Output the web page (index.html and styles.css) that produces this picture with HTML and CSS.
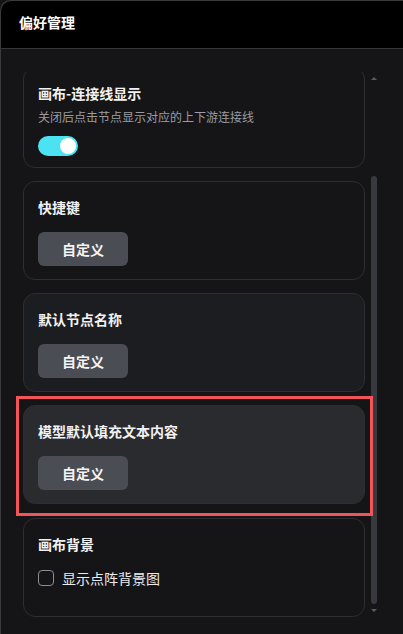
FILE: index.html
```html
<!DOCTYPE html>
<html lang="zh">
<head>
<meta charset="utf-8">
<title>偏好管理</title>
<link rel="stylesheet" href="styles.css">
</head>
<body>
<div class="drawer">
  <header class="header">
    <h1 class="header-title">偏好管理</h1>
  </header>
  <main class="body">
    <div class="scroll-row">
      <div class="list">
        <section class="card card-first">
          <div class="card-title">画布-连接线显示</div>
          <div class="card-desc">关闭后点击节点显示对应的上下游连接线</div>
          <div class="switch"><span class="switch-knob"></span></div>
        </section>
        <section class="card">
          <div class="card-title">快捷键</div>
          <button class="btn">自定义</button>
        </section>
        <section class="card card-hover">
          <div class="card-title">默认节点名称</div>
          <button class="btn">自定义</button>
        </section>
        <section class="card card-active">
          <div class="card-title">模型默认填充文本内容</div>
          <button class="btn">自定义</button>
        </section>
        <section class="card card-last">
          <div class="card-title">画布背景</div>
          <label class="check-row"><span class="checkbox"></span><span class="check-label">显示点阵背景图</span></label>
        </section>
      </div>
      <div class="scrollbar">
        <span class="sb-up"></span>
        <span class="sb-thumb"></span>
        <span class="sb-down"></span>
      </div>
    </div>
  </main>
</div>
</body>
</html>
```
FILE: styles.css
```css
html, body {
  margin: 0;
  padding: 0;
  background: #151518;
  height: 100%;
}
body {
  font-family: "Noto Sans CJK SC", "Noto Sans", sans-serif;
  color: #f2f2f2;
  overflow: hidden;
}
.drawer {
  height: 634px;
  background: #151518;
  border-top-left-radius: 10px;
  overflow: hidden;
  box-shadow: inset 1px 1px 0 #3a3a3d;
}
.header {
  height: 48px;
  background: #000;
  border-bottom: 1px solid #36363a;
  display: flex;
  align-items: center;
  padding-left: 19px;
  border-top-left-radius: 10px;
  box-shadow: inset 1px 1px 0 #3a3a3d;
}
.header-title {
  margin: 0;
  margin-top: -4px;
  font-size: 14px;
  line-height: 20px;
  font-weight: 700;
  color: #ffffff;
}
.body {
  padding-top: 23px;
}
.scroll-row {
  display: flex;
  height: 546px;
}
.list {
  width: 342px;
  margin-left: 23px;
  overflow-x: visible;
  overflow-y: clip;
  display: flex;
  flex-direction: column;
  gap: 13px;
}
.card {
  flex: none;
  box-sizing: border-box;
  border: 1px solid #2d2e32;
  border-radius: 12px;
  padding: 15px 14px 13px;
  background: #151518;
  position: relative;
}
.card-first {
  margin-top: -5px;
  padding-bottom: 11px;
}
.card-hover {
  background: #1c1d20;
}
.card-active {
  background: #2a2b2f;
}
.card-active::after {
  content: "";
  position: absolute;
  top: -10px;
  left: -8px;
  right: -9px;
  bottom: -13px;
  border: 3px solid #f25458;
  z-index: 1;
  pointer-events: none;
}
.card-last {
  padding-bottom: 27px;
  margin-top: 1px;
}
.card-title {
  font-size: 14px;
  line-height: 20px;
  font-weight: 700;
  color: #f2f2f2;
}
.card-desc {
  margin-top: 4px;
  font-size: 12px;
  line-height: 20px;
  color: #9b9ba1;
}
.switch {
  margin-top: 9px;
  width: 40px;
  height: 20px;
  border-radius: 10px;
  background: #4de2f1;
  display: flex;
  align-items: center;
  justify-content: flex-end;
  padding-right: 2px;
  box-sizing: border-box;
}
.switch-knob {
  width: 16px;
  height: 16px;
  border-radius: 50%;
  background: #ffffff;
}
.btn {
  display: block;
  margin-top: 15px;
  width: 90px;
  height: 34px;
  border: none;
  border-radius: 6px;
  background: #4b4d55;
  color: #f4f4f4;
  font-family: inherit;
  font-size: 14px;
  font-weight: 700;
  line-height: 20px;
  padding: 0;
}
.check-row {
  margin-top: 13px;
  display: flex;
  align-items: center;
  gap: 8px;
  height: 22px;
}
.checkbox {
  width: 16px;
  height: 16px;
  box-sizing: border-box;
  border: 1px solid #8d8d92;
  border-radius: 4px;
}
.check-label {
  font-size: 14px;
  line-height: 22px;
  color: #ececec;
}
.scrollbar {
  width: 10px;
  margin-left: 4px;
  display: flex;
  flex-direction: column;
  align-items: center;
}
.sb-up {
  margin-top: 5px;
  width: 0;
  height: 0;
  border-left: 3px solid transparent;
  border-right: 3px solid transparent;
  border-bottom: 3px solid #5a5a60;
}
.sb-thumb {
  margin-top: 96px;
  width: 6px;
  height: 428px;
  border-radius: 3px;
  background: #38393e;
}
.sb-down {
  margin-top: 5px;
  width: 0;
  height: 0;
  border-left: 3px solid transparent;
  border-right: 3px solid transparent;
  border-top: 3px solid #5a5a60;
}
```
